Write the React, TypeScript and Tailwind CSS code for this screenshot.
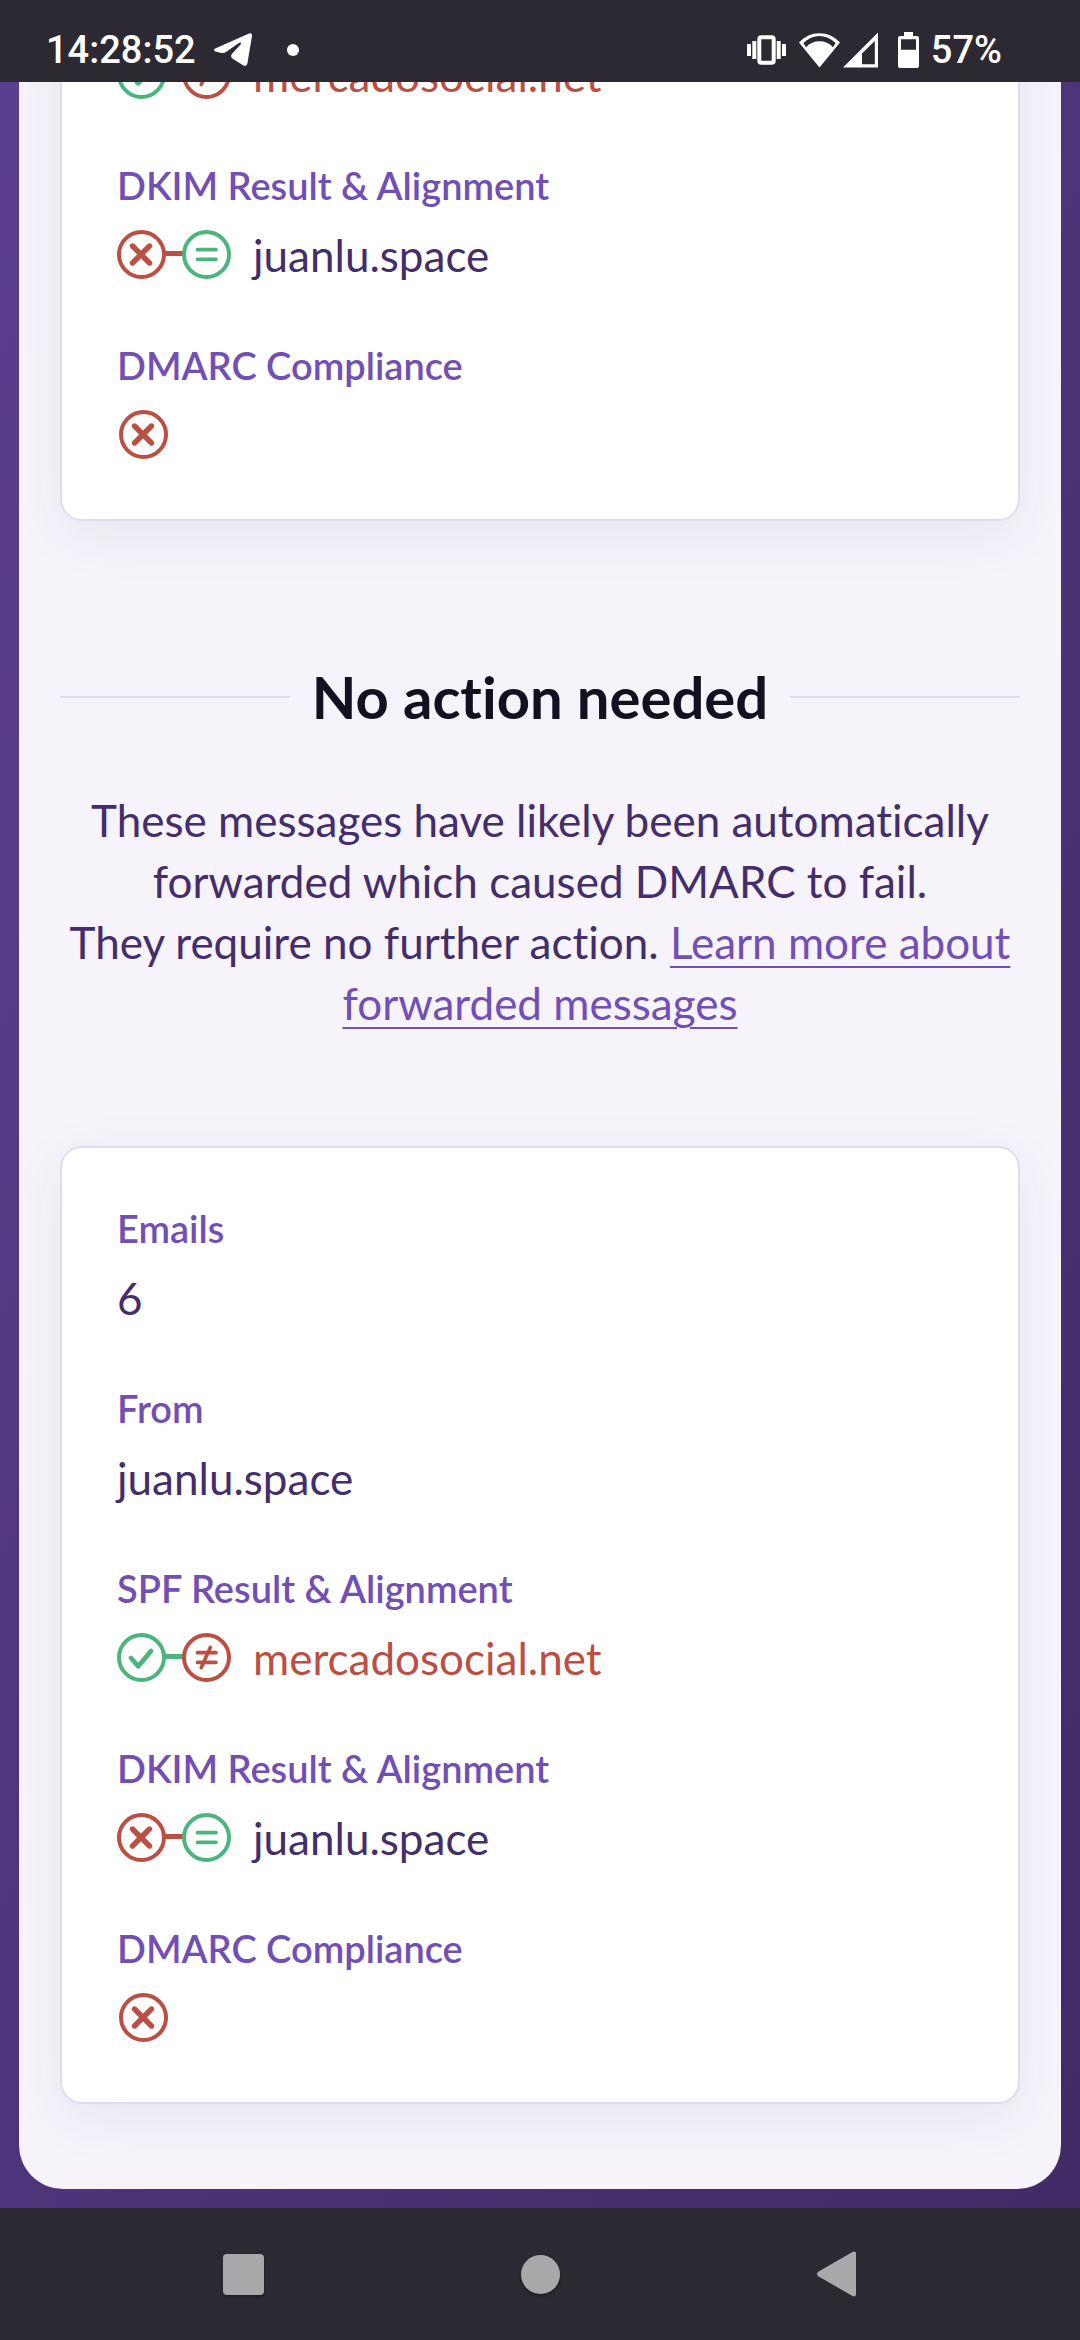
import type { ReactNode } from "react";

const RED = "#bb4f43";
const GREEN = "#4cb57e";

type Mark = "pass" | "fail";

function CrossMark() {
  return <path d="M15.5 16 L32.5 33 M32.5 16 L15.5 33" stroke={RED} strokeWidth="5.4" strokeLinecap="round" />;
}

function ResultPair({ result, aligned }: { result: Mark; aligned: boolean }) {
  const left = result === "pass" ? GREEN : RED;
  const right = aligned ? GREEN : RED;
  const label = `${result === "pass" ? "Passed" : "Failed"}, ${aligned ? "aligned" : "not aligned"}`;
  return (
    <svg role="img" aria-label={label} className="h-[49px] w-[114px] shrink-0" viewBox="0 0 114 49" fill="none">
      <rect x="47" y="21" width="20" height="5" fill={left} />
      <circle cx="24.5" cy="24.5" r="22.5" stroke={left} strokeWidth="4" />
      <circle cx="89.5" cy="24.5" r="22.5" stroke={right} strokeWidth="4" />
      {result === "pass" ? (
        <path d="M14 25 L21.3 33.3 L34 18" stroke={left} strokeWidth="4.8" strokeLinecap="round" strokeLinejoin="round" />
      ) : (
        <CrossMark />
      )}
      <path d="M80.5 19.7 H99 M80.5 29.3 H99" stroke={right} strokeWidth="3.7" strokeLinecap="round" />
      {!aligned && <path d="M93.3 14.5 L84.3 34.5" stroke={right} strokeWidth="3.7" strokeLinecap="round" />}
    </svg>
  );
}

function FailBadge() {
  return (
    <svg role="img" aria-label="Failed" className="ml-0.5 h-[49px] w-[49px]" viewBox="0 0 49 49" fill="none">
      <circle cx="24.5" cy="24.5" r="22.5" stroke={RED} strokeWidth="4" />
      <CrossMark />
    </svg>
  );
}

function Field({ label, children }: { label?: string; children: ReactNode }) {
  return (
    <div className="flex flex-col gap-[13px]">
      {label && <dt className="text-[38px] leading-[52px] font-semibold text-[#724fb5]">{label}</dt>}
      <dd className="flex h-[61px] items-center gap-[22px] text-[44px] leading-[60px]">{children}</dd>
    </div>
  );
}

function Card({ children }: { children: ReactNode }) {
  return (
    <dl className="flex shrink-0 flex-col gap-[54px] rounded-[22px] border-2 border-[#e0dcf0] bg-white px-[55px] py-[54px] shadow-[0_14px_55px_rgba(50,50,70,0.07)]">
      {children}
    </dl>
  );
}

function AuthFields() {
  return (
    <>
      <Field label="DKIM Result &amp; Alignment">
        <ResultPair result="fail" aligned />
        <span>juanlu.space</span>
      </Field>
      <Field label="DMARC Compliance">
        <FailBadge />
      </Field>
    </>
  );
}

function SpfValue() {
  return (
    <>
      <ResultPair result="pass" aligned={false} />
      <span className="text-[#bb4f43]">mercadosocial.net</span>
    </>
  );
}

function StatusBar() {
  return (
    <header className="z-10 flex h-[82px] shrink-0 items-center bg-[#2c2933] pt-[18px] pr-[78px] pl-[46px] font-[Roboto,sans-serif] text-[38px] leading-[48px] font-medium text-white">
      <time>14:28:52</time>
      <svg className="ml-[18px] h-[34px] w-[38px]" viewBox="0 0 38 34" fill="#fff" aria-hidden="true">
        <path d="M1.2 15.6 L35 0.4 Q38.4 -0.6 38 3 L33.4 30.6 Q32.6 34.2 29.4 32.6 L18.4 25.4 Q16 23.6 18 20.8 L26.6 11.4 Q28 8.8 25.2 9.8 L12 19 Q10 20.4 7.4 20 L1.2 18.4 Q-1 17 1.2 15.6 Z" />
      </svg>
      <span className="ml-[35px] h-3 w-3 rounded-full bg-white" />
      <div className="ml-auto flex items-center">
        <svg className="h-[30px] w-[39px]" viewBox="0 0 39 30" fill="#fff" aria-hidden="true">
          <rect x="0" y="9" width="4" height="12" />
          <rect x="5.3" y="6" width="4" height="18" />
          <rect x="29.7" y="6" width="4" height="18" />
          <rect x="35" y="9" width="4" height="12" />
          <rect x="12.3" y="2.3" width="14.4" height="25.4" rx="2" fill="none" stroke="#fff" strokeWidth="4" />
        </svg>
        <svg className="ml-[13px] h-9 w-[41px]" viewBox="0 0 41 36" fill="#fff" aria-hidden="true">
          <path fillRule="evenodd" d="M20.5 35.5 L0 10.5 C11 -2 30 -2 41 10.5 Z M7 15.2 C14 7.4 27 7.4 34 15.2 L36.6 11 C27 1.8 14 1.8 4.4 11 Z" />
        </svg>
        <svg className="ml-[3px] h-9 w-[35px]" viewBox="0 0 35 36" fill="#fff" aria-hidden="true">
          <path fillRule="evenodd" d="M35 0.5 V35.5 H0 Z M31.8 9 L19 21.5 V32.2 H31.8 Z" />
        </svg>
        <svg className="ml-5 h-9 w-[21px]" viewBox="0 0 21 36" fill="#fff" aria-hidden="true">
          <path fillRule="evenodd" d="M6 0 H15 V4 H19 Q21 4 21 6 V34 Q21 36 19 36 H2 Q0 36 0 34 V6 Q0 4 2 4 H6 Z M3 7.3 V17.7 H18 V7.3 Z" />
        </svg>
        <span className="ml-3">57%</span>
      </div>
    </header>
  );
}

function NavBar() {
  return (
    <nav className="flex h-[132px] shrink-0 items-stretch justify-evenly bg-[#2c2933]">
      <button type="button" aria-label="Recent apps" className="flex w-[106px] items-center justify-center">
        <span className="h-[41px] w-[41px] rounded-[4px] bg-[#a9a9ab] shadow-[0_2px_3px_rgba(0,0,0,0.3)]" />
      </button>
      <button type="button" aria-label="Home" className="flex w-[106px] items-center justify-center">
        <span className="h-[39px] w-[39px] rounded-full bg-[#a9a9ab] shadow-[0_2px_3px_rgba(0,0,0,0.3)]" />
      </button>
      <button type="button" aria-label="Back" className="flex w-[106px] items-center justify-center">
        <svg className="h-[46px] w-[39px]" viewBox="0 0 39 46" fill="#a9a9ab" aria-hidden="true">
          <path d="M1.2 20.8 L35.5 1 Q39 -0.6 39 3 V43 Q39 46.6 35.5 45 L1.2 25.2 Q-1.2 23 1.2 20.8 Z" />
        </svg>
      </button>
    </nav>
  );
}

export default function App() {
  return (
    <div className="flex h-screen flex-col overflow-hidden bg-[#2c2933] font-[Lato,sans-serif] text-[#432d6b] [font-variant-ligatures:none]">
      <StatusBar />
      <main className="flex min-h-0 flex-1 flex-col justify-end overflow-hidden bg-linear-to-br from-[#5b3f8f] to-[#412a66] px-[19px] pb-[19px]">
        <div className="flex shrink-0 flex-col rounded-b-[44px] bg-[#f6f3fb] px-[41px] pb-[85px]">
          <Card>
            <Field>
              <SpfValue />
            </Field>
            <AuthFields />
          </Card>

          <section className="mt-[137px] mb-[112px]">
            <h2 className="flex items-center gap-[22px] text-[58px] leading-[78px] font-bold text-[#141020]">
              <span className="h-0.5 flex-1 bg-[#e0dcf0]" />
              No action needed
              <span className="h-0.5 flex-1 bg-[#e0dcf0]" />
            </h2>
            <p className="mt-[54px] text-center text-[44px] leading-[61px]">
              These messages have likely been automatically forwarded which caused DMARC to fail.
              <br />
              They require no further action.{" "}
              <a href="#forwarded" className="text-[#724fb5] underline decoration-2 underline-offset-[7px]">
                Learn more about forwarded messages
              </a>
            </p>
          </section>

          <Card>
            <Field label="Emails">6</Field>
            <Field label="From">juanlu.space</Field>
            <Field label="SPF Result &amp; Alignment">
              <SpfValue />
            </Field>
            <AuthFields />
          </Card>
        </div>
      </main>
      <NavBar />
    </div>
  );
}
